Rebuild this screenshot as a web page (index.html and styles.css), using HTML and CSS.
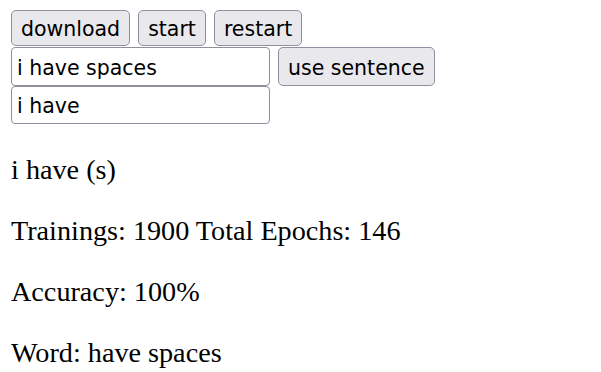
FILE: index.html
```html
<!DOCTYPE html>
<html>
<head>
<meta charset="utf-8">
<link rel="stylesheet" href="styles.css">
</head>
<body>
<div class="controls">
  <div class="row">
    <button class="btn">download</button>
    <button class="btn">start</button>
    <button class="btn">restart</button>
  </div>
  <div class="row">
    <input class="field" type="text" value="i have spaces">
    <button class="btn">use sentence</button>
  </div>
  <div class="row">
    <input class="field" type="text" value="i have">
  </div>
</div>
<p class="line first">i have (s)</p>
<p class="line">Trainings: 1900 Total Epochs: 146</p>
<p class="line">Accuracy: 100%</p>
<p class="line">Word: have spaces</p>
</body>
</html>
```
FILE: styles.css
```css
html, body {
  background: #ffffff;
}
body {
  margin: 10px 11px;
  font-family: "Liberation Serif", "Times New Roman", serif;
  font-size: 28.2px;
  color: #000;
}
.controls {
  display: flex;
  flex-direction: column;
  gap: 1px;
}
.row {
  display: flex;
  align-items: flex-start;
  gap: 8px;
}
.btn {
  font-family: "DejaVu Sans", Tahoma, sans-serif;
  font-size: 20.5px;
  color: #000;
  background: #e9e9ed;
  border: 1px solid #8f8f9d;
  border-radius: 5px;
  height: 36px;
  padding: 2px 9px 0;
  margin: 0;
}
.row + .row .btn {
  height: 39px;
}
.field {
  font-family: "DejaVu Sans", Tahoma, sans-serif;
  font-size: 20.5px;
  color: #000;
  background: #fff;
  border: 1px solid #8f8f9d;
  border-radius: 4px;
  width: 259px;
  height: 39px;
  padding: 2px 5px 0;
  margin: 0;
  box-sizing: border-box;
}
.row:last-child .field {
  height: 38px;
  margin-top: -1px;
}
.line {
  margin: 28px 0 0;
  line-height: 33px;
}
.line.first {
  margin-top: 29px;
}
```
